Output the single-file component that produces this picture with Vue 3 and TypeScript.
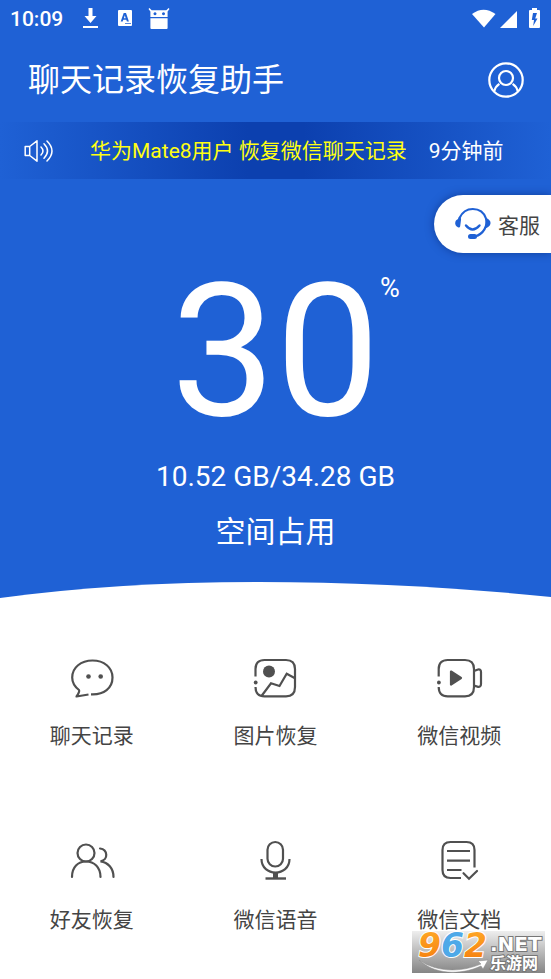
<script setup lang="ts">
import { ref } from 'vue'

type IconName = 'chat' | 'picture' | 'video' | 'friends' | 'voice' | 'document'

interface Tool {
  icon: IconName
  label: string
}

const tools: Tool[] = [
  { icon: 'chat', label: '聊天记录' },
  { icon: 'picture', label: '图片恢复' },
  { icon: 'video', label: '微信视频' },
  { icon: 'friends', label: '好友恢复' },
  { icon: 'voice', label: '微信语音' },
  { icon: 'document', label: '微信文档' },
]

const percent = ref(30)
const used = ref('10.52 GB')
const total = ref('34.28 GB')
</script>

<template>
  <div class="page">
    <div class="top">
      <div class="status">
        <span class="clock">10:09</span>
        <svg class="status-left" width="90" height="24" viewBox="0 0 90 24" fill="#fff" aria-hidden="true">
          <path d="M6.500 1h4v8h4l-6 7-6-7h4zM1 19h15v2H1z" />
          <path fill-rule="evenodd" d="M37 3h12q1 0 1 1v14q0 1-1 1H37q-1 0-1-1V4q0-1 1-1zM41.700 6l-3 8.500h2l.6-1.800h3l.6 1.800h2L44 6zm1.100 2.300l.9 3h-1.800zM43 16.200v.9h6v-.9z" />
          <path fill-rule="evenodd" d="M67.400 1l2.300 2.200h14.600L86.600 1l.9 1-1.900 2.400V10H68.400V4.400L66.500 2zM73 5.200a1.500 1.500 0 1 0 .01 0zM81.500 5.200a1.500 1.500 0 1 0 .01 0zM68.400 11.300h17.200V21q0 1-1 1H69.400q-1 0-1-1z" />
        </svg>
        <svg class="status-right" width="70" height="24" viewBox="0 0 70 24" fill="#fff" aria-hidden="true">
          <path d="M0 7Q11.500-1.500 23.500 7L12 20.500z" />
          <path d="M45 4v17H28z" />
          <path fill-rule="evenodd" d="M60 1h5v2h2q1 0 1 1v16q0 1-1 1h-9q-1 0-1-1V4q0-1 1-1h2zM61 6l-1.200 7h2.200l-.8 6 4.300-7.500h-2.300L65 6z" />
        </svg>
      </div>

      <header class="header">
        <h1 class="title">聊天记录恢复助手</h1>
        <button class="profile" type="button" aria-label="个人中心">
          <svg width="36" height="36" viewBox="0 0 36 36" fill="none" stroke="#fff" stroke-width="2.200" aria-hidden="true">
            <circle cx="18" cy="18" r="16.700" />
            <circle cx="18" cy="16" r="7" />
            <path d="M6.300 29Q7.500 24.500 11.400 21.900M29.700 29Q28.500 24.500 24.600 21.900" />
          </svg>
        </button>
      </header>

      <div class="notice">
        <svg width="30" height="24" viewBox="0 0 30 24" fill="none" stroke="#fff" stroke-width="1.500" stroke-linejoin="round" aria-hidden="true">
          <path d="M1.200 7.500h4.500L13 1.800v20.400L5.700 16.500H1.200zM5.700 7.500v9" />
          <path d="M17 8q4 4 0 8M20 4.800q7 7.200 0 14.400M23 2q10 10 0 20" stroke-linecap="round" />
        </svg>
        <p class="notice-text">华为Mate8用户 恢复微信聊天记录</p>
        <span class="notice-time">9分钟前</span>
      </div>

      <section class="usage">
        <div class="percent">
          <span class="percent-value">{{ percent }}</span>
          <span class="percent-sign">%</span>
        </div>
        <p class="amount">{{ used }}/{{ total }}</p>
        <p class="caption">空间占用</p>
      </section>

      <svg class="curve" viewBox="0 0 551 20" preserveAspectRatio="none" aria-hidden="true">
        <path d="M0 18C80 7 165 2 258 2C360 2 465 8 551 17V20H0z" fill="#fff" />
      </svg>

      <button class="service" type="button">
        <svg width="38" height="34" viewBox="0 0 38 34" fill="none" stroke="#1f61d5" stroke-width="2.200" stroke-linecap="round" aria-hidden="true">
          <path d="M5.500 11C8.500 4.500 13 2 18.800 2C25 2 30 5.500 32 11.500C34 19 29.500 27 21 29.500" />
          <path d="M5.600 12L4.700 19" stroke-width="3" />
          <path d="M5 11.500Q.8 13 1.200 16.500T5 20z" fill="#1f61d5" stroke="none" />
          <path d="M32 11Q37 13 36.500 16.500T30.500 21.500Q32.500 16 32 11z" fill="#1f61d5" stroke="none" />
          <path d="M12 18.500Q18.500 26.500 25.500 18.500" stroke-width="2.400" />
          <rect x="14" y="27" width="9" height="5" rx="2.500" fill="#1f61d5" stroke="none" />
        </svg>
        <span>客服</span>
      </button>
    </div>

    <main class="tools">
      <button v-for="tool in tools" :key="tool.icon" class="tool" type="button">
        <svg class="tool-icon" width="48" height="48" viewBox="0 0 48 48" fill="none" stroke="#505050" stroke-width="2.200" aria-hidden="true">
          <template v-if="tool.icon === 'chat'">
            <path d="M20.500 41.500L8.500 43.500C10.500 40.500 12 38.500 11 37C6.500 33.500 4.200 29 4.200 24.500C4.200 14.500 13 7.500 24.500 7.500C36 7.500 44.500 14.500 44.500 24.500C44.500 35 36 42 23 41.300" stroke-linejoin="round" />
            <g fill="#505050" stroke="none"><circle cx="20.500" cy="23.500" r="2.300" /><circle cx="32.700" cy="23.500" r="2.300" /></g>
          </template>
          <template v-else-if="tool.icon === 'picture'">
            <path d="M4.500 23.500V16Q4.500 7 13.500 7H35Q44 7 44 16V34Q44 43.300 35 43.300H13.500Q4.500 43.300 4.500 34" />
            <path d="M10.500 43L20 30.300L28.500 33L35.700 20.800L44 25.300" />
            <g fill="#505050" stroke="none"><circle cx="18" cy="18.500" r="6" /><circle cx="4.700" cy="29.500" r="1.900" /></g>
          </template>
          <template v-else-if="tool.icon === 'video'">
            <path d="M3.700 23.500V16Q3.700 7 12.700 7H30Q39 7 39 16V34Q39 43.300 30 43.300H12.700Q3.700 43.300 3.700 34M39 18L43 16.500Q46 16 46 19V31Q46 34 43 33.800L39 32.500" />
            <path d="M16 18.500L26 25L16 31.500z" fill="#505050" stroke-linejoin="round" />
            <circle cx="3.900" cy="29.500" r="1.900" fill="#505050" stroke="none" />
          </template>
          <template v-else-if="tool.icon === 'friends'">
            <circle cx="18" cy="16" r="8.500" />
            <path d="M4 40C4 30 10 24.500 18 24.500S32.500 30 32.500 40M32 11.500C40 12.500 40.500 23 32.500 24.300C40 25.500 45.500 31 45.500 40" stroke-linecap="round" />
          </template>
          <template v-else-if="tool.icon === 'voice'">
            <rect x="16.500" y="5" width="15.500" height="24.500" rx="7.750" />
            <path d="M10.500 22C10.500 40 38.500 40 38.500 22" />
            <path d="M14.500 41.500h20.500" stroke-width="2.400" />
            <path d="M22 35h5v6h-5z" fill="#505050" stroke="none" />
          </template>
          <template v-else>
            <path d="M39.500 30.500V13Q39.500 5 31.500 5H15.500Q7.500 5 7.500 13V33Q7.500 41 15.500 41H26M12 14h23M12 23.700h23M12 33h14.500" />
            <path d="M28.500 36.200L34 41.700L42 34" stroke-linecap="round" />
          </template>
        </svg>
        <span>{{ tool.label }}</span>
      </button>
    </main>

    <svg class="badge" width="133" height="42" viewBox="0 0 133 42" role="img" aria-label="962.NET 乐游网">
      <defs>
        <linearGradient id="badge-bg" x1="0" y1="0" x2="0" y2="1">
          <stop offset="0" stop-color="#eee" />
          <stop offset="1" stop-color="#858585" />
        </linearGradient>
        <linearGradient id="badge-orange" x1="0" y1="0" x2="0" y2="1">
          <stop offset="0" stop-color="#ffac29" />
          <stop offset="1" stop-color="#f57b0b" />
        </linearGradient>
      </defs>
      <rect width="133" height="42" fill="url(#badge-bg)" />
      <path d="M7 29C24 41 48 42 69 33L66 30L76 29L71 38L69 35C47 45 22 43 7 29z" fill="#fff" stroke="#888" stroke-width=".5" />
      <text class="badge-number" x="6" y="26"><tspan fill="url(#badge-orange)">9</tspan><tspan fill="#4ea9e8">6</tspan><tspan fill="url(#badge-orange)">2</tspan></text>
      <text class="badge-net" x="78" y="20">.NET</text>
      <text class="badge-name" x="78" y="38">乐游网</text>
    </svg>
  </div>
</template>

<style>
body {
  margin: 0;
  background: #fff;
}
</style>

<style scoped>
.page {
  position: relative;
  font-family: Roboto, "Noto Sans CJK SC", sans-serif;
  background: #fff;
}

button {
  padding: 0;
  border: 0;
  background: none;
  font: inherit;
  cursor: pointer;
}

h1,
p {
  margin: 0;
  font-weight: 400;
}

.top {
  position: relative;
  color: #fff;
  background: #1f61d5;
}

.status {
  display: flex;
  align-items: center;
  height: 38px;
  padding: 0 9px 0 10px;
}

.clock {
  font-size: 21px;
  line-height: 24px;
  font-weight: 500;
}

.status-left {
  margin-left: 19px;
}

.status-right {
  margin-left: auto;
}

.header {
  display: flex;
  align-items: center;
  justify-content: space-between;
  height: 84px;
  padding: 0 27px 0 28px;
}

.title {
  font-size: 32px;
  line-height: 40px;
}

.profile {
  display: flex;
}

.notice {
  display: flex;
  align-items: center;
  height: 57px;
  padding: 0 24px;
  font-size: 21px;
  line-height: 28px;
  white-space: nowrap;
  background: linear-gradient(90deg, #1f61d5 0%, #0c40af 45%, #0c40af 55%, #1f61d5 100%);
}

.notice-text {
  margin-left: 36px;
  color: #ff1;
}

.notice-time {
  margin-left: 22px;
}

.usage {
  padding: 97px 0 26px;
  text-align: center;
}

.percent {
  display: grid;
  grid-template-columns: 1fr auto 1fr;
  align-items: start;
}

.percent-value {
  grid-column: 2;
  font-size: 186px;
  line-height: 150px;
}

.percent-sign {
  font-size: 27px;
  line-height: 24px;
  text-align: left;
}

.amount {
  padding-top: 34px;
  font-size: 28px;
  line-height: 34px;
}

.caption {
  padding-top: 16px;
  font-size: 30px;
  line-height: 44px;
}

.curve {
  display: block;
  width: 100%;
  height: 20px;
}

.service {
  position: absolute;
  top: 195px;
  right: 0;
  display: flex;
  align-items: center;
  gap: 6px;
  height: 58px;
  padding: 0 11px 0 20px;
  border-radius: 29px 0 0 29px;
  color: #444;
  background: #fff;
  box-shadow: 0 0 8px rgba(0, 30, 100, 0.5);
  font-size: 21px;
}

.tools {
  display: grid;
  grid-template-columns: repeat(3, 1fr);
  padding-bottom: 5px;
}

.tool {
  display: flex;
  flex-direction: column;
  align-items: center;
  gap: 21px;
  height: 184px;
  padding-top: 53px;
  color: #444;
  font-size: 21px;
  line-height: 28px;
}

.tool-icon {
  flex: none;
}

.badge {
  position: absolute;
  right: 6px;
  bottom: 0;
  overflow: visible;
}

.badge-number {
  font: italic 700 33px "DejaVu Sans", sans-serif;
  stroke: #fff;
  stroke-width: 2px;
  paint-order: stroke;
}

.badge-net,
.badge-name {
  fill: #fff;
  stroke: #777;
  stroke-width: 2px;
  paint-order: stroke;
}

.badge-net {
  font: 700 20px "DejaVu Sans", sans-serif;
}

.badge-name {
  font: 700 16px "Noto Sans CJK SC", sans-serif;
}
</style>
